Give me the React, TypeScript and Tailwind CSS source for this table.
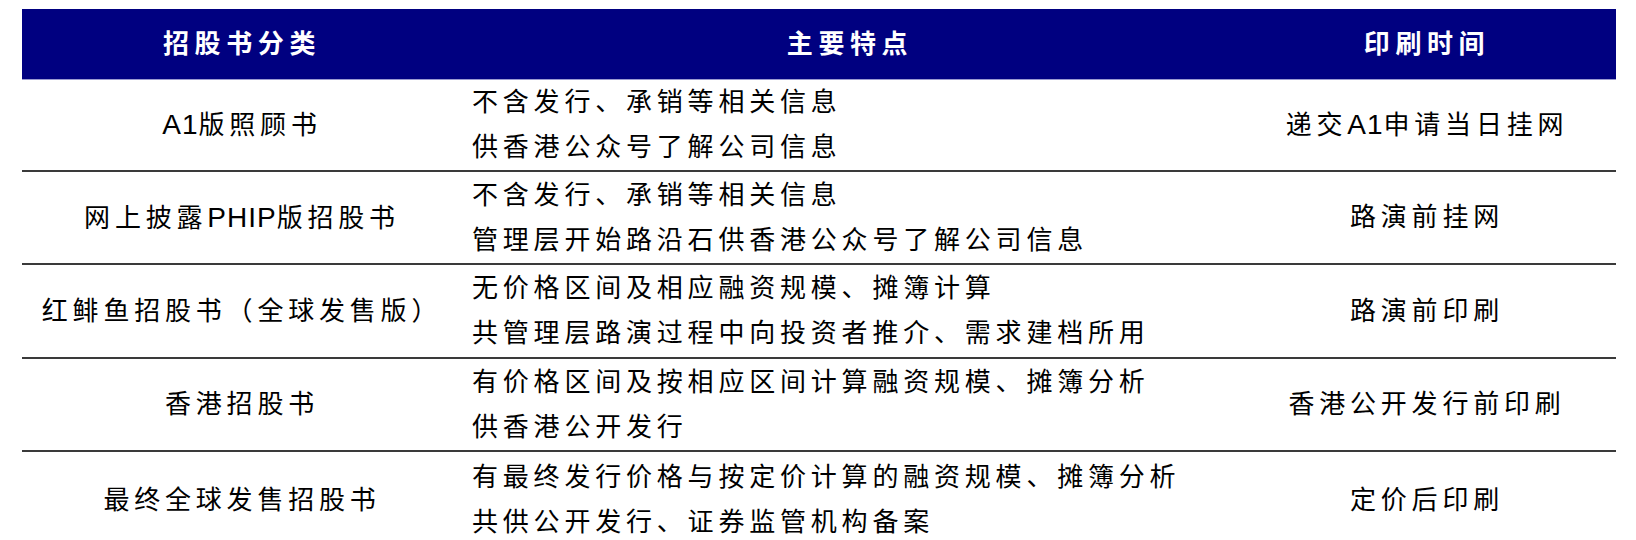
const rows = [
  {
    name: "A1版照顾书",
    points: ["不含发行、承销等相关信息", "供香港公众号了解公司信息"],
    time: "递交A1申请当日挂网",
    h: "h-[92px]",
  },
  {
    name: "网上披露PHIP版招股书",
    points: ["不含发行、承销等相关信息", "管理层开始路沿石供香港公众号了解公司信息"],
    time: "路演前挂网",
    h: "h-[93px]",
  },
  {
    name: "红鲱鱼招股书（全球发售版）",
    points: ["无价格区间及相应融资规模、摊簿计算", "共管理层路演过程中向投资者推介、需求建档所用"],
    time: "路演前印刷",
    h: "h-[94px]",
  },
  {
    name: "香港招股书",
    points: ["有价格区间及按相应区间计算融资规模、摊簿分析", "供香港公开发行"],
    time: "香港公开发行前印刷",
    h: "h-[93px]",
  },
  {
    name: "最终全球发售招股书",
    points: ["有最终发行价格与按定价计算的融资规模、摊簿分析", "共供公开发行、证券监管机构备案"],
    time: "定价后印刷",
    h: "h-[96px]",
  },
];

// Latin runs (A1, PHIP) sit tighter and a bit larger than the CJK text
function Mixed({ text }: { text: string }) {
  const parts = text.split(/([A-Za-z0-9]+)/);
  return (
    <>
      {parts.map((part, i) =>
        /^[A-Za-z0-9]+$/.test(part) ? (
          <span key={i} className="text-[28px] tracking-[1px]">
            {part}
          </span>
        ) : (
          <span key={i}>{part}</span>
        )
      )}
    </>
  );
}

export default function App() {
  return (
    <div
      className="h-[540px] w-[1636px] overflow-hidden bg-white pl-[22px] pr-[20px] pt-[9px] text-black"
      style={{ fontFamily: '"Liberation Sans", "Noto Sans CJK SC", sans-serif' }}>
      {/* header */}
      <div className="grid h-[71px] grid-cols-[440px_776px_1fr] items-center border-b border-[#9a9ad0] bg-[#000080] text-[26px] font-bold tracking-[5.6px] text-white">
        <div className="text-center">招股书分类</div>
        <div className="text-center">主要特点</div>
        <div className="text-center">印刷时间</div>
      </div>

      {rows.map((row, i) => (
        <div
          key={row.name}
          className={`grid grid-cols-[440px_776px_1fr] items-center text-[26px] tracking-[4.8px] ${row.h} ${
            i < rows.length - 1 ? "border-b-2 border-[#3a3a3a]" : ""
          }`}>
          <div className="text-center">
            <Mixed text={row.name} />
          </div>
          <div className="pl-[10px] leading-[45px]">
            {row.points.map((p) => (
              <div key={p} className="whitespace-nowrap">
                {p}
              </div>
            ))}
          </div>
          <div className="text-center">
            <Mixed text={row.time} />
          </div>
        </div>
      ))}
    </div>
  );
}
